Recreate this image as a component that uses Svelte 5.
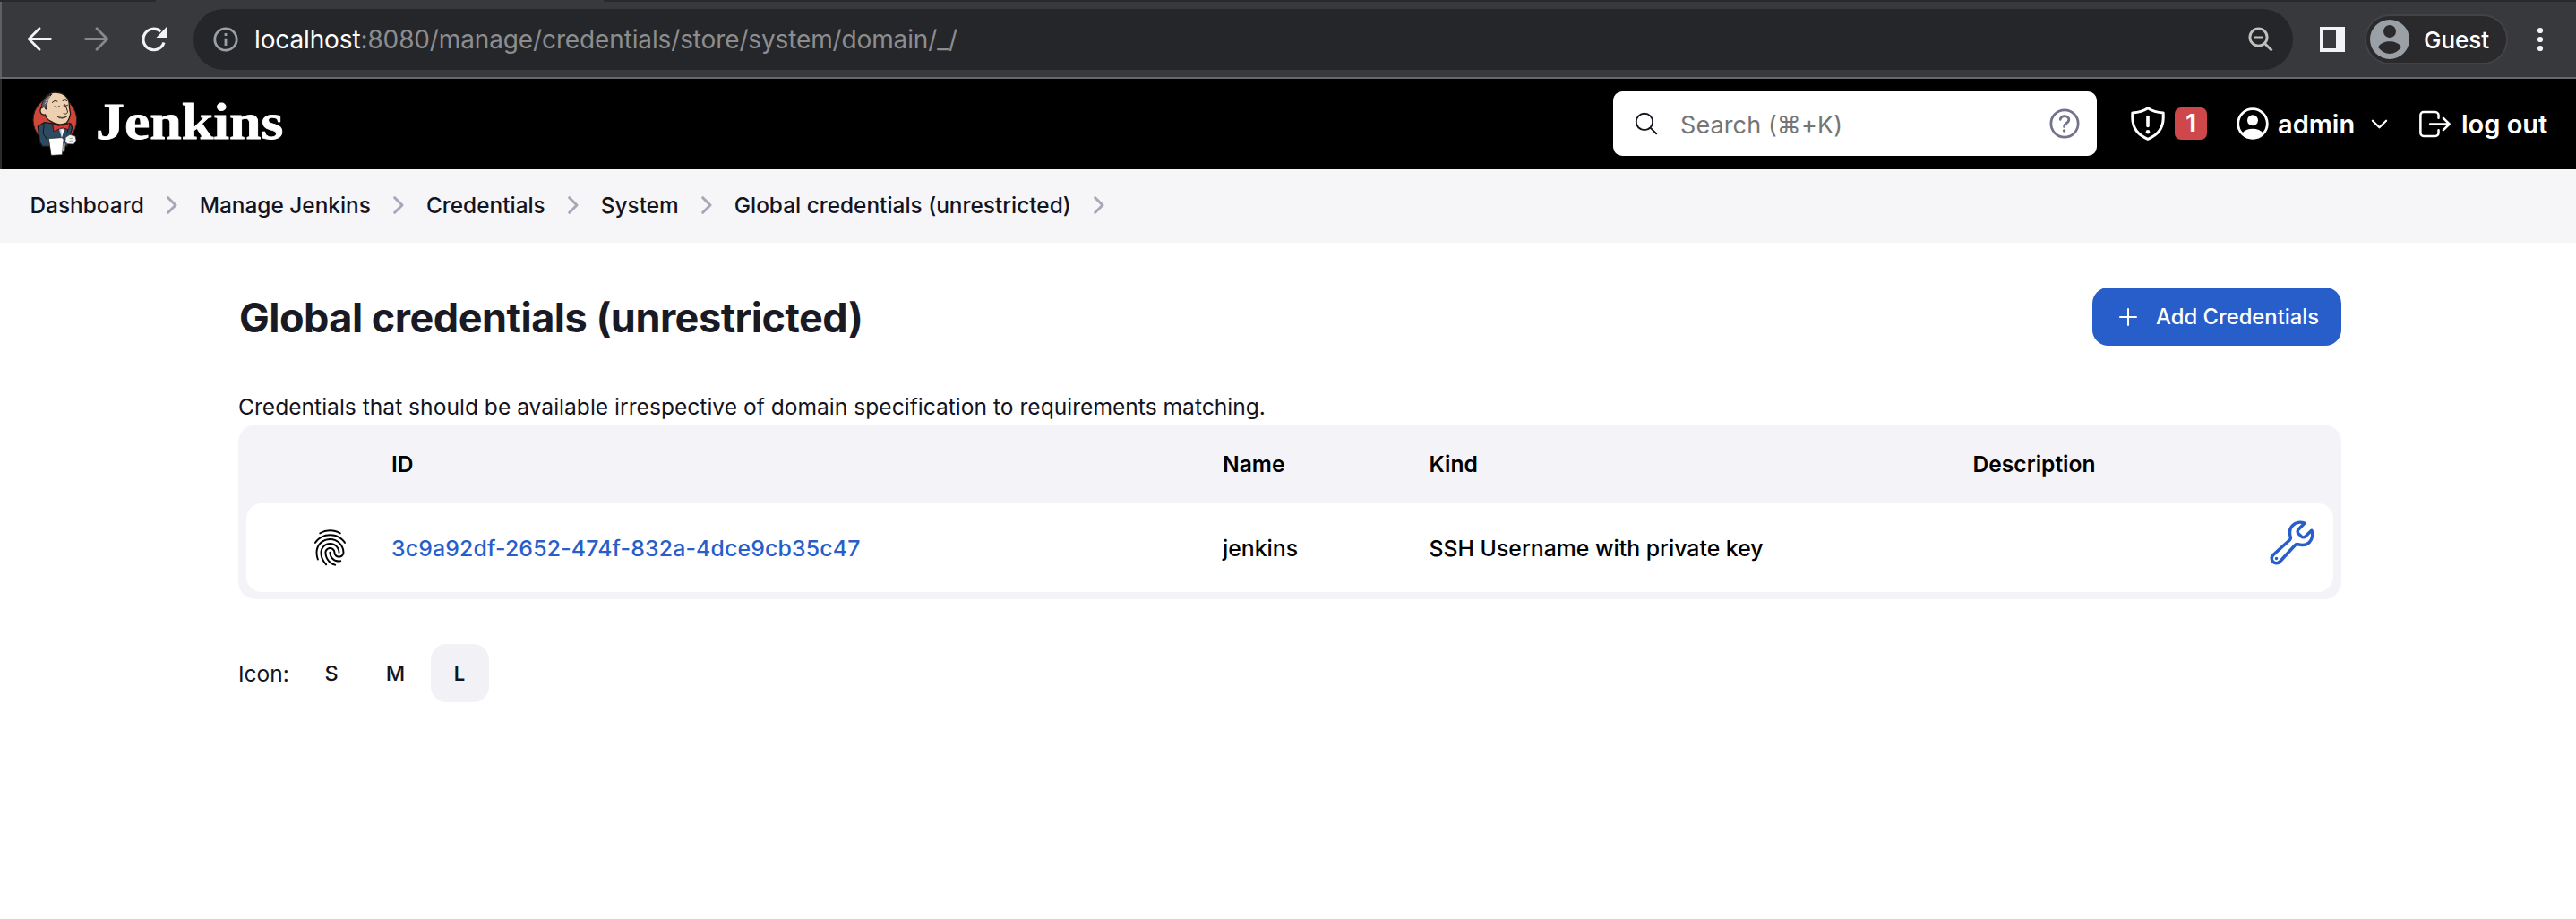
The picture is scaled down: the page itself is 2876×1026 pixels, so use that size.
<script>
  const crumbs = ['Dashboard', 'Manage Jenkins', 'Credentials', 'System', 'Global credentials (unrestricted)'];
  const columns = ['', 'ID', 'Name', 'Kind', 'Description', ''];
  const credentials = [
    { id: '3c9a92df-2652-474f-832a-4dce9cb35c47', name: 'jenkins', kind: 'SSH Username with private key', description: '' },
  ];
  const sizes = ['S', 'M', 'L'];
  let size = $state('L');
</script>

<div class="browser">
  <div class="tabs"><span class="tab"></span></div>
  <div class="toolbar">
    <svg class="nav" width="28" height="28" viewBox="0 0 28 28"><path d="M26.5 13.5H2.5M14 1.8 2.3 13.5 14 25.2" /></svg>
    <svg class="nav dim" width="28" height="28" viewBox="0 0 28 28"><path d="M1.5 13.5h24M14 1.8l11.7 11.7L14 25.2" /></svg>
    <svg class="nav reload" width="30" height="28" viewBox="0 0 30 28"><path d="M25 17.5A11.8 11.8 0 1 1 21.5 5" /><path class="tip" d="M28 0v12H16.5z" /></svg>
    <div class="omnibox">
      <svg width="28" height="28" viewBox="0 0 28 28"><circle cx="14" cy="14" r="12.2" /><path d="M14 12.7V21M14 7v3" /></svg>
      <span class="url"><b>localhost</b>:8080/manage/credentials/store/system/domain/_/</span>
      <svg class="zoom" width="28" height="28" viewBox="0 0 28 28"><circle cx="11.5" cy="11.5" r="9.6" /><path class="minus" d="M6.5 11.5h10" /><path d="m18.5 18.5 8 8" /></svg>
    </div>
    <svg class="panel" width="28" height="28" viewBox="0 0 28 28"><path fill-rule="evenodd" d="M0 0h28v28H0zM4 4v20h14V4z" /></svg>
    <div class="guest">
      <svg width="44" height="44" viewBox="0 0 44 44"><circle class="disc" cx="22" cy="22" r="22" /><circle cx="22" cy="13" r="7" /><path d="M9 30.5C12 26 17 24.300 22 24.300S32 26 35 30.500C32 35 27 38 22 38S12 35 9 30.500z" /></svg>
      <span>Guest</span>
    </div>
    <svg class="dots" width="8" height="28" viewBox="0 0 8 28"><circle cx="4" cy="4" r="3.100" /><circle cx="4" cy="14" r="3.100" /><circle cx="4" cy="24" r="3.100" /></svg>
  </div>
</div>

<header>
  <svg class="butler" width="52" height="72" viewBox="45 36 156 216">
    <ellipse cx="124" cy="132" rx="73" ry="77" fill="#cf4738" stroke="#2c1b1a" stroke-width="3" />
    <path d="M67 153l22-13 40 6 48-2 5 14-11 38-6 24H82l-9-14z" fill="#2c4a60" stroke="#10191f" stroke-width="4" stroke-linejoin="round" />
    <path d="M88 146l-4 30 14 22M171 146l-6 30" fill="none" stroke="#10191f" stroke-width="3" />
    <path d="M132 150l14 44 18-46z" fill="#a9c3d8" stroke="#1d2a33" stroke-width="2" />
    <path d="M145 163l2 28 7-26z" fill="#fff" />
    <path d="M89 62C97 44 118 36 138 41c26 5 36 26 34 48l4 22c-2 8-4 22-14 31-16 9-38 4-52-6-10-5-17-12-18-22-12 2-18-6-17-14 0-8 6-13 12-12z" fill="#ecd0b0" stroke="#241a17" stroke-width="4" stroke-linejoin="round" />
    <path d="M112 46C94 50 81 66 78 92l10-4 6 9 4-22c2-12 6-18 14-29z" fill="#5d5b62" stroke="#1f1d20" stroke-width="3" />
    <path d="M94 68l14-16M90 78l12-14" stroke="#b9b7ba" stroke-width="3" />
    <path d="M115 73q8-10 17-4M150 67q8-6 14 0M123 87q9 6 16-1M153 84q8 4 14-2M158 80l8 22c2 8-6 12-13 8M133 121c12 5 24 4 34-3" fill="none" stroke="#30201b" stroke-width="3" stroke-linecap="round" />
    <path d="M137 125q13 5 25-3" fill="none" stroke="#30201b" stroke-width="2" />
    <path d="M117 145l22 7 5-3 9 1 20-8-3 22-19-5-8 1-22 10z" fill="#d93a34" stroke="#4a1412" stroke-width="3" stroke-linejoin="round" />
    <path d="M160 190l14-9 18 5 3 14-8 13-22-1-6-8z" fill="#f3f3f3" stroke="#333" stroke-width="2" />
    <path d="M174 194l11-2M174 202l10-1" stroke="#777" stroke-width="2" />
    <path d="M150 210h9l-3 28h-8z" fill="#d8d8d8" stroke="#444" stroke-width="2" />
    <path d="M104 194l43-3 6 6-5 51-36 2z" fill="#fff" stroke="#333" stroke-width="2" />
  </svg>
  <div class="brand"><span>Jenkins</span></div>
  <label class="search">
    <svg width="30" height="30" viewBox="0 0 512 512"><path d="M221.090 64a157.090 157.090 0 10157.090 157.090A157.100 157.100 0 00221.090 64zM338.290 338.290L448 448" /></svg>
    <span>Search (⌘+K)</span>
    <svg class="help" width="44" height="44" viewBox="0 0 512 512"><path d="M256 80a176 176 0 10176 176A176 176 0 00256 80z" /><path d="M200 202.290s.84-17.500 19.570-32.570C230.680 160.770 244 158.180 256 158c10.930-.14 20.690 1.670 26.530 4.450 10 4.760 29.470 16.380 29.470 41.090 0 26-17 37.810-36.370 50.800S251 281.430 251 296" /><circle cx="251" cy="348" r="20" /></svg>
  </label>
  <div class="alerts">
    <svg width="38" height="38" viewBox="0 0 38 38"><path d="M19 1.700C14 5 8 6.500 1.800 7v6C2 24 8.500 32 19 36.300 29.500 32 36 24 36.200 13V7C30 6.500 24 5 19 1.700z" /><path class="bang" d="M19 11.500v10" /><circle cx="19" cy="28.200" r="2.300" /></svg>
    <span class="badge">1</span>
  </div>
  <div class="user">
    <svg width="36" height="36" viewBox="0 0 36 36"><circle class="ring" cx="18" cy="18" r="16.300" /><circle cx="18" cy="14.300" r="6" /><path d="M6 29C8.500 25.500 13 23.800 18 23.800S27.500 25.500 30 29C27 32.500 23 34.500 18 34.500S9 32.500 6 29z" /></svg>
    <span>admin</span>
    <svg class="caret" width="27" height="27" viewBox="0 0 512 512"><path d="M112 184l144 144 144-144" /></svg>
  </div>
  <div class="logout">
    <svg width="43" height="43" viewBox="0 0 512 512"><path d="M304 336v40a40 40 0 01-40 40H104a40 40 0 01-40-40V136a40 40 0 0140-40h152c22.090 0 48 17.910 48 40v40M368 336l80-80-80-80M192 256h244" /></svg>
    <span>log out</span>
  </div>
</header>

<nav class="crumbs">
  {#each crumbs as crumb}
    <span>{crumb}</span>
    <svg width="12" height="20" viewBox="0 0 12 20"><path d="M1.700 1.700 10 10l-8.300 8.300" /></svg>
  {/each}
</nav>

<main>
  <div class="title">
    <h1>Global credentials (unrestricted)</h1>
    <button class="add">
      <svg width="32" height="32" viewBox="0 0 512 512"><path d="M256 112v288M400 256H112" /></svg>
      <span>Add Credentials</span>
    </button>
  </div>
  <p>Credentials that should be available irrespective of domain specification to requirements matching.</p>
  <div class="table">
    <div class="row head">
      {#each columns as column}<span>{column}</span>{/each}
    </div>
    {#each credentials as c}
      <div class="row item">
        <span class="print">
          <svg width="43" height="43" viewBox="0 0 512 512"><path d="M390.420 75.280a10.450 10.450 0 01-5.320-1.440C340.720 50.080 302.350 40 256.350 40c-45.770 0-89.230 11.280-128.760 33.840C122 77 115.110 74.800 111.870 69a12.400 12.400 0 014.630-16.320A281.810 281.810 0 01256.350 16c49.230 0 92.230 11.280 139.390 36.480a12 12 0 014.850 16.080 11.300 11.300 0 01-10.170 6.720zm-330.790 126a11.730 11.730 0 01-6.700-2.160 12.260 12.260 0 01-2.780-16.800c22.890-33.600 52-60 86.690-78.480C209.420 65 302.350 64.720 375.160 103.600c34.680 18.480 63.800 44.640 86.690 78a12.290 12.290 0 01-2.780 16.800 11.260 11.260 0 01-16.180-2.880c-20.800-30.240-47.150-54-78.360-70.560-66.340-35.280-151.180-35.280-217.290.24-31.440 16.800-57.790 40.800-78.590 71a10 10 0 01-9.020 5.080zM204.100 491a10.660 10.660 0 01-8.090-3.600C175.900 466.480 165 453 149.550 424c-16-29.520-24.270-65.520-24.270-104.160 0-71.280 58.710-129.360 130.840-129.360S387 248.560 387 319.840a11.560 11.560 0 11-23.110 0c0-58.080-48.320-105.360-107.720-105.360S148.400 261.760 148.400 319.840c0 34.560 7.390 66.480 21.490 92.400 14.800 27.600 25 39.360 42.770 58.080a12.670 12.670 0 010 17 12.440 12.440 0 01-8.560 3.680zm165.750-44.400c-27.510 0-51.780-7.200-71.660-21.360a129.100 129.100 0 01-55-105.360 11.570 11.570 0 1123.120 0 104.280 104.280 0 0044.840 85.440c16.410 11.520 35.600 17 58.720 17a147.410 147.410 0 0024-2.400c6.240-1.200 12.250 3.120 13.400 9.840a11.920 11.920 0 01-9.470 13.920 152.280 152.280 0 01-27.950 2.880zM323.380 496a13 13 0 01-3-.48c-36.760-10.560-60.800-24.720-86-50.400-32.370-33.360-50.160-77.760-50.160-125.280 0-38.880 31.900-70.560 71.190-70.560s71.200 31.680 71.200 70.560c0 25.680 21.500 46.560 48.080 46.560s48.080-20.880 48.080-46.560c0-90.480-75.130-163.920-167.590-163.920-65.650 0-125.750 37.920-152.790 96.720-9 19.440-13.640 42.240-13.640 67.200 0 18.720 1.610 48.240 15.480 86.640 2.320 6.240-.69 13.200-6.700 15.360a11.340 11.340 0 01-14.790-7 276.390 276.390 0 01-16.880-95c0-28.800 5.320-55 15.720-77.760 30.750-67 98.940-110.400 173.600-110.400 105.180 0 190.710 84.240 190.710 187.920 0 38.880-31.900 70.560-71.200 70.560S303.500 358.720 303.500 319.840c0-25.680-21.490-46.560-48.080-46.560s-48.080 20.880-48.080 46.560c0 41 15.260 79.440 43.230 108.240 22 22.560 43 35 75.590 44.160 6.240 1.680 9.710 8.400 8.090 14.640a11.390 11.390 0 01-10.870 9.120z" /></svg>
        </span>
        <span class="id">{c.id}</span>
        <span>{c.name}</span>
        <span>{c.kind}</span>
        <span>{c.description}</span>
        <span class="wrench">
          <svg width="56" height="56" viewBox="0 0 512 512"><path d="M393.870 190a32.100 32.100 0 01-45.250 0l-26.570-26.570a32.090 32.090 0 010-45.260L382.190 58a1 1 0 00-.3-1.640c-38.820-16.640-89.150-8.160-121.110 23.570-30.580 30.350-32.320 76-21.120 115.840a31.930 31.930 0 01-9.060 32.080L64 380a48.170 48.170 0 1068 68l153.860-167a31.930 31.930 0 0131.600-9.130c39.540 10.590 84.540 8.600 114.720-21.190 32.490-32 39.500-88.560 23.750-120.930a1 1 0 00-1.600-.26z" /><circle cx="96" cy="416" r="16" /></svg>
        </span>
      </div>
    {/each}
  </div>
  <div class="sizes">
    <span class="label">Icon:</span>
    {#each sizes as s}
      <button class="size" class:active={s === size} onclick={() => (size = s)}>{s}</button>
    {/each}
  </div>
</main>

<style>
  :global(body) { margin: 0; background: #fff; font-family: Inter, 'Liberation Sans', sans-serif; color: #14141f; }
  svg { display: block; flex: none; fill: none; stroke-linecap: round; stroke-linejoin: round; }
  span { white-space: nowrap; }
  button { border: 0; font: inherit; color: inherit; background: none; }

  .browser { box-sizing: border-box; height: 88px; background: #38393d; border-bottom: 2px solid #68696d; box-shadow: inset 2px 0 #5f6064; }
  .tabs { height: 2px; display: flex; background: #28292c; }
  .tab { margin-left: 174px; width: 500px; background: #38393d; }
  .toolbar { height: 84px; display: flex; align-items: center; padding-left: 30px; }
  .nav { stroke: #f1f3f4; stroke-width: 2.800; margin-right: 36px; }
  .nav.dim { stroke: #87888b; }
  .nav.reload { margin-right: 28px; stroke-linecap: butt; stroke-width: 3.200; }
  .tip { fill: #f1f3f4; stroke: none; }
  .omnibox { box-sizing: border-box; width: 2344px; height: 68px; border-radius: 34px; background: #25262a; display: flex; align-items: center; padding: 0 22px; }
  .omnibox svg { stroke: #9aa0a6; stroke-width: 2.800; stroke-linecap: butt; }
  .url { margin-left: 18px; font-size: 28px; letter-spacing: -0.130px; color: #8c8d8f; }
  .url b { font-weight: 400; color: #fff; }
  .omnibox .zoom { margin-left: auto; stroke: #c1c0be; stroke-width: 2.900; }
  .zoom .minus { stroke-width: 2; }
  .panel { margin-left: 30px; fill: #f1f3f4; }
  .guest { box-sizing: border-box; width: 160px; height: 56px; margin-left: 22px; border: 2px solid #424347; border-radius: 28px; background: #2a2a2d; display: flex; align-items: center; padding-left: 4px; }
  .guest svg { fill: #2a2a2d; }
  .guest .disc { fill: #9aa0a6; }
  .guest span { margin-left: 16px; font-size: 26px; font-weight: 500; color: #fff; }
  .dots { margin-left: 32px; fill: #f1f3f4; }

  header { box-sizing: border-box; height: 101px; background: #000; color: #fff; display: flex; align-items: center; padding: 0 0 1px 35px; box-shadow: inset 2px 0 #2b2b2b; }
  .brand { width: 1694px; padding: 0 0 5px 20px; font: 700 56px/60px 'Liberation Serif', serif; -webkit-text-stroke: 0.800px #fff; }
  .brand span { display: inline-block; transform: scaleX(1.140); transform-origin: 0 50%; }
  .search { box-sizing: border-box; width: 540px; height: 72px; border-radius: 10px; background: #fff; display: flex; align-items: center; padding: 0 14px 0 22px; font-size: 27px; color: #757575; }
  .search svg { stroke: #14141f; stroke-width: 32; }
  .search span { margin-left: 23px; padding-top: 2px; letter-spacing: 0.100px; }
  .search .help { margin-left: auto; stroke: #73738c; }
  .help circle { fill: #73738c; stroke: none; }
  .alerts { display: flex; align-items: center; margin-left: 38px; width: 118px; }
  .alerts svg { stroke: #fff; stroke-width: 3; }
  .alerts .bang { stroke-width: 3.600; }
  .alerts circle { fill: #fff; stroke: none; }
  .badge { width: 36px; height: 36px; margin-left: 11px; border-radius: 7px; background: #ce474b; font-weight: 700; font-size: 27px; line-height: 36px; text-align: center; }
  .user { display: flex; align-items: center; width: 200px; font-size: 29px; font-weight: 600; }
  .user svg { fill: #fff; }
  .user .ring { fill: none; stroke: #fff; stroke-width: 2.800; }
  .user span { margin-left: 10px; }
  .user .caret { fill: none; stroke: #fff; stroke-width: 42; margin-left: 14px; }
  .logout { display: flex; align-items: center; font-size: 29px; font-weight: 600; }
  .logout svg { stroke: #fff; stroke-width: 30; }
  .logout span { margin-left: 8px; }

  .crumbs { box-sizing: border-box; height: 82px; padding: 0 0 2px 33.500px; background: #f6f6f9; display: flex; align-items: center; gap: 25px; font-size: 24.400px; font-weight: 500; }
  .crumbs svg { stroke: #a7a7b8; stroke-width: 3; }

  main { width: 2348px; margin-left: 266px; padding-top: 1px; }
  .title { height: 163px; display: flex; align-items: center; justify-content: space-between; }
  h1 { margin: 2px 0 0 1px; font-size: 45px; font-weight: 700; letter-spacing: -0.500px; color: #1a1a24; }
  .add { width: 278px; height: 65px; border-radius: 18px; background: #275eca; color: #fff; display: flex; align-items: center; padding: 0 0 0 24px; font-size: 23.800px; font-weight: 500; }
  .add svg { stroke: #fff; stroke-width: 32; }
  .add span { margin-left: 15px; }
  p { margin: 0; height: 39px; line-height: 39px; font-size: 24.600px; }
  .table { box-sizing: border-box; height: 195px; border-radius: 20px; background: #f3f3f8; padding: 0 9px 8px; color: #000; }
  .row { display: grid; grid-template-columns: 162px 928px 230.500px 607px 328.500px 74px; align-items: center; }
  .head { height: 88px; font-size: 24.600px; font-weight: 600; }
  .item { height: 99px; border-radius: 17px; background: #fff; font-size: 24.800px; font-weight: 500; }
  .id { color: #275eca; letter-spacing: 0.180px; }
  .print { padding-left: 72px; }
  .print svg { fill: #000; }
  .wrench svg { margin-top: -12px; stroke: #275eca; stroke-width: 32; }
  .wrench circle { fill: #275eca; stroke: none; }
  .sizes { display: flex; align-items: center; margin-top: 50px; height: 65px; }
  .label { width: 71.500px; font-size: 24.500px; }
  .size { width: 65px; height: 65px; margin-right: 6.500px; padding: 0; border-radius: 18px; font-size: 23.500px; font-weight: 500; text-align: center; }
  .active { background: #f1f1f6; font-size: 22px; font-weight: 600; }
</style>
